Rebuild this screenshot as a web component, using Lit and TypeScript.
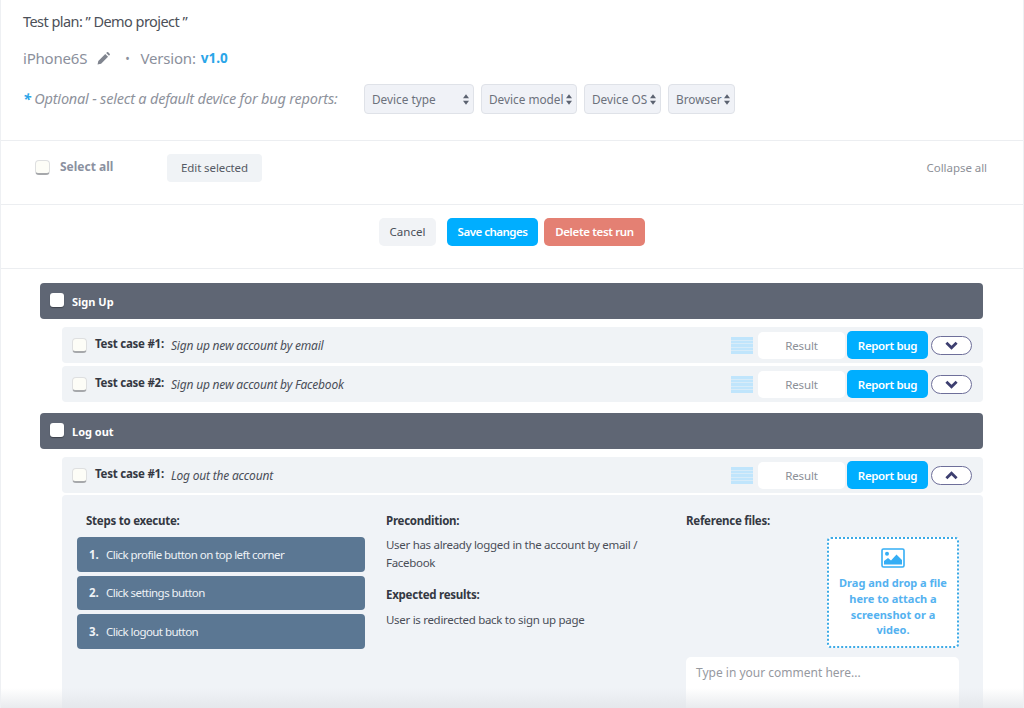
import { LitElement, html, css, svg } from "lit";
import { customElement } from "lit/decorators.js";

const chevron = (up: boolean) => html`<svg class="chev" viewBox="0 0 14 9" width="13" height="9" aria-hidden="true">
  <path d=${up ? "M1.5 7.5 7 2l5.5 5.5" : "M1.5 1.5 7 7l5.5-5.5"} fill="none" stroke="#3d3f70" stroke-width="3"/>
</svg>`;

const updown = html`<svg class="updown" viewBox="0 0 7 12" width="6" height="11" aria-hidden="true">
  <path d="M3.5 0 7 4.6H0zM3.5 12 0 7.4h7z" fill="#5b6270"/></svg>`;

const lines = html`<svg class="lines" viewBox="0 0 22 17" width="22" height="17" aria-hidden="true">
  ${[0, 3.5, 7, 10.5, 14].map((y) => svg`<rect x="0" y=${y} width="22" height="3" fill="#c0e5fc"/>`)}
</svg>`;

@customElement("app-root")
export class AppRoot extends LitElement {
  static styles = css`
    :host { display: block; font-family: "Noto Sans", "Open Sans", sans-serif; color: #3a3f4a; }
    * { box-sizing: border-box; }
    .page { position: relative; height: 708px; overflow: hidden; background: #fff; border-left: 1px solid #eef0f3; border-right: 1px solid #eef0f3; }
    .head { height: 141px; padding: 12px 0 0 22px; border-bottom: 1px solid #eceef1; }
    .title { font-size: 14.5px; line-height: 18px; letter-spacing: -0.55px; color: #4c5058; }
    .device { display: flex; align-items: center; margin-top: 18px; height: 20px; font-size: 15px; letter-spacing: -0.2px; color: #8b909c; }
    .pencil { margin-left: 10px; }
    .dot { margin: 0 11px 0 15px; font-size: 12px; }
    .ver { margin-left: 5px; font-size: 13.5px; font-weight: 700; letter-spacing: 0; color: #2aa5e8; }
    .optional { display: flex; align-items: center; margin-top: 15px; height: 32px; }
    .optional-text { width: 341px; margin-top: -2px; font-size: 14.5px; font-style: italic; letter-spacing: -0.2px; color: #8e929c; white-space: nowrap; }
    .optional-text b { color: #2aa5e8; }
    .selects { display: flex; gap: 7px; }
    .sel { display: flex; align-items: center; justify-content: space-between; height: 30px; padding: 0 4px 0 7px; font-size: 11.8px; color: #6c717c; background: #f0f2f7; border: 1px solid #dfe2e8; border-radius: 4px; }
    .sel.t { width: 110px; }
    .sel.m { width: 96px; }
    .sel.o { width: 77px; }
    .sel.b { width: 67px; }
    .bar { display: flex; align-items: center; height: 64px; padding: 0 36px 10px 34px; border-bottom: 1px solid #eceef1; }
    .check { flex: none; width: 15px; height: 15px; background: #fdfdf7; border: 1px solid #dedfe0; border-bottom: 2px solid #a6a8ab; border-radius: 4px; }
    .select-all { width: 107px; margin-left: 10px; margin-top: -3px; font-size: 12px; font-weight: 700; color: #8b91a0; }
    .edit { display: flex; align-items: center; justify-content: center; width: 95px; height: 28px; font-size: 11.5px; letter-spacing: -0.1px; color: #555a64; background: #f0f3f6; border-radius: 4px; }
    .collapse { margin-left: auto; font-size: 11.5px; letter-spacing: -0.05px; color: #8d9097; }
    .actions { display: flex; justify-content: center; align-items: center; height: 64px; padding: 0 0 10px 0; border-bottom: 1px solid #eceef1; }
    .btn { display: flex; align-items: center; justify-content: center; height: 28px; font-size: 11.5px; border-radius: 5px; }
    .cancel { width: 57px; margin-right: 11px; color: #4a4f59; background: #f1f3f6; }
    .save { width: 91px; margin-right: 6px; font-weight: 600; letter-spacing: -0.5px; color: #fff; background: #00aeff; }
    .del { width: 101px; font-weight: 600; letter-spacing: -0.35px; color: #fff; background: #e48073; }
    .list { padding: 14px 40px 0 39px; }
    .group { display: flex; align-items: center; height: 36px; padding-left: 10px; margin-bottom: 8px; font-size: 11px; font-weight: 700; color: #fff; background: #5f6674; border-radius: 4px; }
    .group .check { width: 14px; height: 14px; margin-top: -2px; background: #fff; border: 0; border-radius: 3px; box-shadow: 0 1px 1px #3d424c; }
    .group span { margin-left: 8px; }
    .case { display: flex; align-items: center; height: 36px; margin: 0 0 3px 22px; padding: 0 11px 0 10px; background: #f0f3f6; border-radius: 4px; }
    .case .name { margin: -4px 0 0 8px; width: 76px; font-size: 11.5px; font-weight: 700; letter-spacing: -0.25px; color: #343842; white-space: nowrap; }
    .case .desc { font-size: 12px; font-style: italic; letter-spacing: -0.2px; color: #4a4e58; }
    .gap { height: 8px; }
    .case-right { margin-left: auto; display: flex; align-items: center; }
    .lines { margin-right: 5px; }
    .result { display: flex; align-items: center; justify-content: center; width: 87px; height: 27px; font-size: 11.5px; letter-spacing: -0.15px; color: #8b8f97; background: #fff; border-radius: 5px; }
    .report { display: flex; align-items: center; justify-content: center; width: 81px; height: 28px; margin-left: 2px; font-size: 11.5px; font-weight: 600; letter-spacing: -0.35px; color: #fff; background: #00aeff; border-radius: 5px; }
    .toggle { display: flex; align-items: center; justify-content: center; width: 41px; height: 19px; margin-left: 3px; background: #fff; border: 1px solid #6e6f9a; border-radius: 10px; }
    .open { margin-bottom: 2px; }
    .detail { display: grid; grid-template-columns: 309px 300px 1fr; height: 240px; margin-left: 22px; padding: 18px 24px 0 15px; background: #f0f3f7; border-radius: 4px 4px 0 0; }
    .label { font-size: 11.5px; line-height: 16px; font-weight: 700; letter-spacing: -0.25px; color: #343842; }
    .steps .label { margin-left: 9px; margin-bottom: 8px; }
    .step { display: flex; align-items: center; width: 288px; height: 34.5px; margin-bottom: 4px; padding-left: 12px; font-size: 11.5px; letter-spacing: -0.55px; color: #eef2f6; background: #5b7793; border-radius: 4px; }
    .step b { width: 17px; letter-spacing: 0; }
    .mid p { margin: 7px 0 15px; font-size: 11.5px; line-height: 18px; letter-spacing: -0.3px; color: #4a4e58; }
    .mid p:last-child { margin-top: 8px; }
    .drop { display: flex; flex-direction: column; align-items: center; width: 132px; height: 111px; margin: 8px 0 9px auto; padding: 9px 8px 0; font-size: 11px; line-height: 15.8px; font-weight: 700; text-align: center; color: #55b2f0; background: #fff; border: 2px dotted #3ba9e6; border-radius: 4px; }
    .drop svg { margin-bottom: 7px; }
    .comment { height: 80px; padding: 7px 10px; font-size: 12px; color: #96999f; background: #fff; border-radius: 5px; }
    .fade { position: absolute; left: 0; right: 0; bottom: 0; height: 20px; background: linear-gradient(to bottom, rgba(225,228,232,0), rgba(225,228,232,0.75)); pointer-events: none; }
  `;

  private testCase(name: string, desc: string, up = false) {
    return html`<div class="case ${up ? "open" : ""}">
      <div class="check"></div>
      <div class="name">${name}</div>
      <div class="desc">${desc}</div>
      <div class="case-right">
        ${lines}
        <div class="result">Result</div>
        <div class="report">Report bug</div>
        <div class="toggle">${chevron(up)}</div>
      </div>
    </div>`;
  }

  render() {
    return html`<div class="page">
      <section class="head">
        <div class="title">Test plan: ” Demo project ”</div>
        <div class="device">
          <span>iPhone6S</span>
          <svg class="pencil" viewBox="0 0 14 14" width="13" height="13" aria-hidden="true">
            <path d="M0.6 13.4 1.4 9.6 8.9 2.1 11.9 5.1 4.4 12.6zM9.9 1.1 10.7.4a1 1 0 0 1 1.4 0l1.5 1.5a1 1 0 0 1 0 1.4l-.7.8z" fill="#80858f"/>
          </svg>
          <span class="dot">•</span>
          <span>Version:</span>
          <span class="ver">v1.0</span>
        </div>
        <div class="optional">
          <div class="optional-text"><b>*</b> Optional - select a default device for bug reports:</div>
          <div class="selects">
            <div class="sel t">Device type ${updown}</div>
            <div class="sel m">Device model ${updown}</div>
            <div class="sel o">Device OS ${updown}</div>
            <div class="sel b">Browser ${updown}</div>
          </div>
        </div>
      </section>
      <section class="bar">
        <div class="check"></div>
        <div class="select-all">Select all</div>
        <div class="edit">Edit selected</div>
        <div class="collapse">Collapse all</div>
      </section>
      <section class="actions">
        <div class="btn cancel">Cancel</div>
        <div class="btn save">Save changes</div>
        <div class="btn del">Delete test run</div>
      </section>
      <section class="list">
        <div class="group"><div class="check"></div><span>Sign Up</span></div>
        ${this.testCase("Test case #1:", "Sign up new account by email")}
        ${this.testCase("Test case #2:", "Sign up new account by Facebook")}
        <div class="gap"></div>
        <div class="group"><div class="check"></div><span>Log out</span></div>
        ${this.testCase("Test case #1:", "Log out the account", true)}
        <div class="detail">
          <div class="steps">
            <div class="label">Steps to execute:</div>
            <div class="step"><b>1.</b>Click profile button on top left corner</div>
            <div class="step"><b>2.</b>Click settings button</div>
            <div class="step"><b>3.</b>Click logout button</div>
          </div>
          <div class="mid">
            <div class="label">Precondition:</div>
            <p>User has already logged in the account by email / Facebook</p>
            <div class="label">Expected results:</div>
            <p>User is redirected back to sign up page</p>
          </div>
          <div class="refs">
            <div class="label">Reference files:</div>
            <div class="drop">
              <svg viewBox="0 0 24 20" width="24" height="20" aria-hidden="true">
                <rect x="1" y="1" width="22" height="18" rx="1.5" fill="none" stroke="#35aef5" stroke-width="1.6"/>
                <circle cx="6" cy="5.8" r="2" fill="#35aef5"/>
                <path d="M3 16.5V13l4-3 3 2.4L15.5 6.5 21 12v4.5z" fill="#35aef5"/>
              </svg>
              <div>Drag and drop a file here to attach a screenshot or a video.</div>
            </div>
            <div class="comment">Type in your comment here...</div>
          </div>
        </div>
      </section>
      <div class="fade"></div>
    </div>`;
  }
}
